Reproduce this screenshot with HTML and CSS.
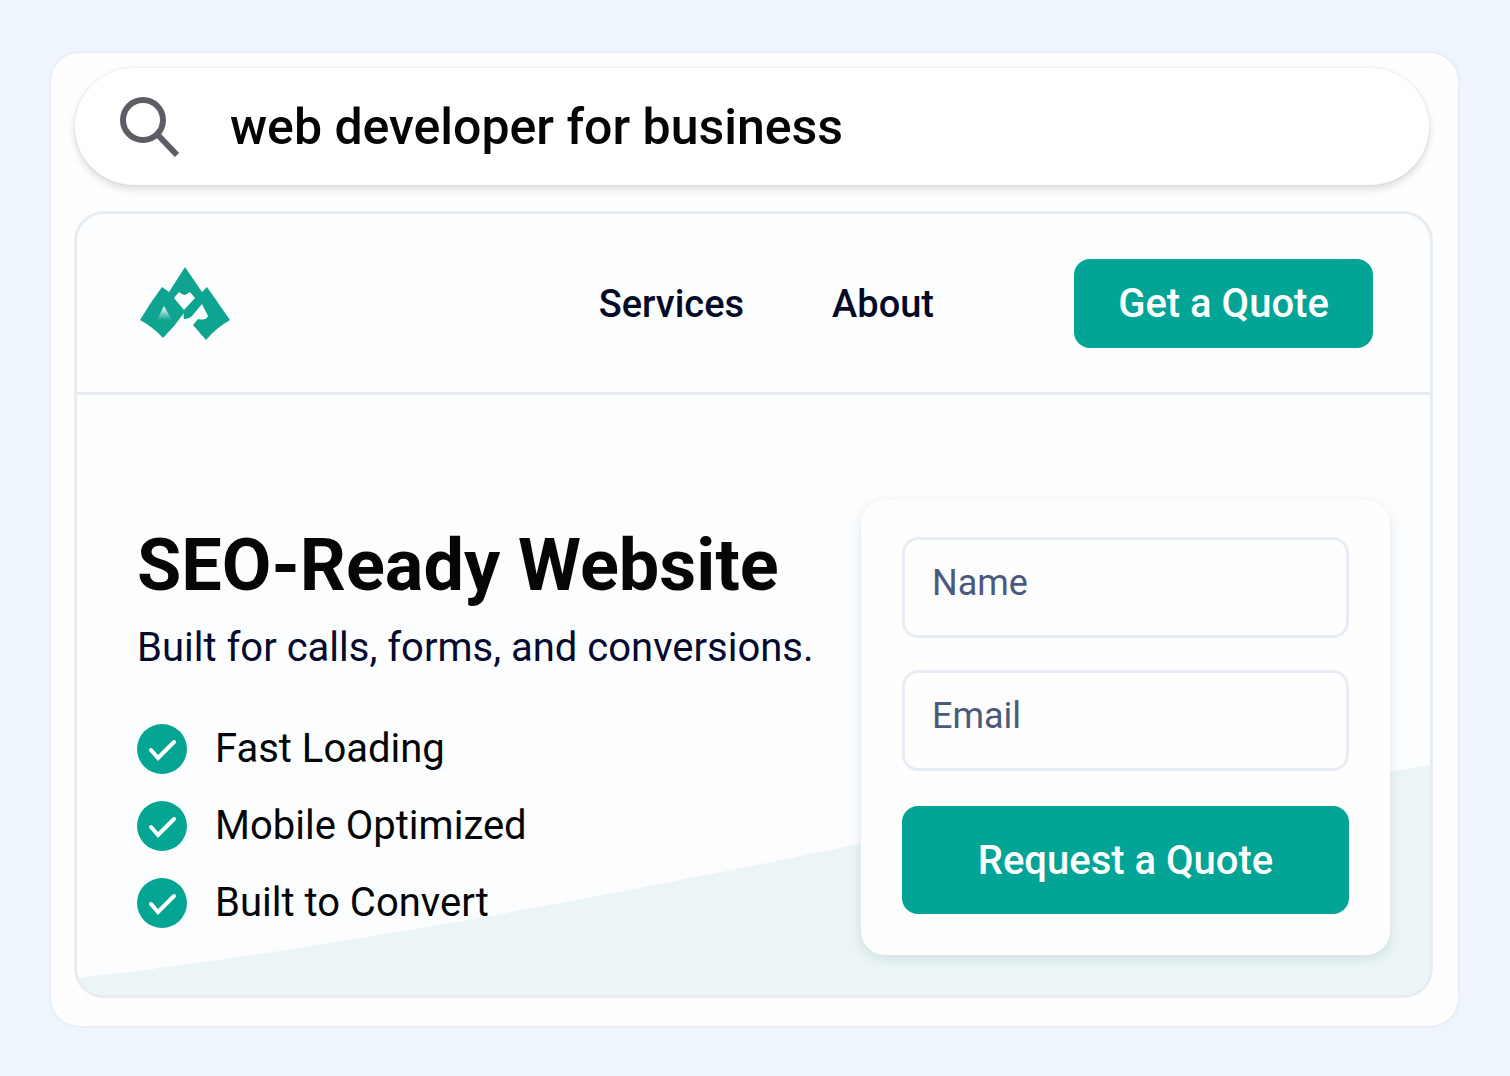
FILE: index.html
```html
<!DOCTYPE html>
<html lang="en">
<head>
<meta charset="UTF-8">
<meta name="viewport" content="width=device-width, initial-scale=1.0">
<title>SEO-Ready Website</title>

<link rel="stylesheet" href="styles.css">
</head>

<body>

<main class="container">

<!-- Search bar -->
<form class="search" role="search">
<svg class="search-icon" viewBox="0 0 60 60" aria-hidden="true">
<circle cx="23" cy="23" r="20" />
<path d="M37 37 L57 58" />
</svg>
<input type="text" name="q" aria-label="Search" value="web developer for business">
</form>

<!-- Website preview -->
<div class="site">

<header class="site-header">
<a class="logo" href="#" aria-label="Home">
<svg viewBox="0 0 90 74" aria-hidden="true">
<defs>
<linearGradient id="peak" x1="0" y1="0" x2="0" y2="1">
<stop offset="0" stop-color="#fff" />
<stop offset="1" stop-color="#fff" stop-opacity="0" />
</linearGradient>
</defs>
<path fill="#0fa490" d="M45 0 L62 25 L67 20 L90 53 Q76 61 66 73 L53 58 L58 52 Q66 54 68 49 L62 37 L52 49 Q49 52 44 52 Q43 49 44 46 Q35 59 23 71 Q13 60 0 53 Q10 36 22 20 L29 25 Z" />
<path fill="#fff" d="M39 25 Q42 28 45 28 L50 25 L55 31 L44 43 L34 31 Z" />
<path fill="url(#peak)" d="M24 39 L32 53 L17 53 Z" />
</svg>
</a>
<nav class="nav">
<a href="#services">Services</a>
<a href="#about">About</a>
</nav>
<button type="button" class="btn quote-btn">Get a Quote</button>
</header>

<section class="hero">
<svg class="wave" viewBox="0 0 1353 230" preserveAspectRatio="none" aria-hidden="true">
<path d="M0 213 C250 185 550 127 783 79 C950 44 1180 30 1353 0 V230 H0 Z" />
</svg>

<div class="hero-text">
<h1>SEO-Ready Website</h1>
<p>Built for calls, forms, and conversions.</p>
<ul class="features">
<li>
<svg viewBox="0 0 50 50" aria-hidden="true"><circle cx="25" cy="25" r="25" /><path d="M14 26 L21 34 L37 18" /></svg>
Fast Loading
</li>
<li>
<svg viewBox="0 0 50 50" aria-hidden="true"><circle cx="25" cy="25" r="25" /><path d="M14 26 L21 34 L37 18" /></svg>
Mobile Optimized
</li>
<li>
<svg viewBox="0 0 50 50" aria-hidden="true"><circle cx="25" cy="25" r="25" /><path d="M14 26 L21 34 L37 18" /></svg>
Built to Convert
</li>
</ul>
</div>

<form class="quote-form">
<input type="text" name="name" aria-label="Name" placeholder="Name">
<input type="email" name="email" aria-label="Email" placeholder="Email">
<button type="submit" class="btn">Request a Quote</button>
</form>
</section>

</div>

</main>

</body>
</html>
```
FILE: styles.css
```css
*{
    box-sizing:border-box;
}

body{
    margin:0;
    padding:53px 52px 51px 51px;
    font-family:Roboto, "Liberation Sans", sans-serif;
    color:#050608;
    background:#eff5fd;
}

.container{
    padding:15px 25px 28px 23px;
    background:#fefefe;
    border-radius:28px;
    box-shadow:0 0 3px rgba(100,120,150,0.2);
}

input, button{
    font-family:inherit;
}

/* Search bar */
.search{
    display:flex;
    align-items:center;
    gap:50px;
    height:117px;
    margin:0 4px 0 1px;
    padding:0 45px;
    background:#fff;
    border-radius:60px;
    box-shadow:0 4px 8px rgba(0,0,0,0.14), 0 0 3px rgba(0,0,0,0.08);
}

.search-icon{
    flex:none;
    width:60px;
    height:60px;
    fill:none;
    stroke:#5d5d66;
    stroke-width:6;
}

.search input{
    flex:1;
    min-width:0;
    padding:0;
    border:none;
    outline:none;
    background:none;
    font-size:50px;
    font-weight:500;
    color:#050505;
}

/* Website preview */
.site{
    margin-top:26px;
    border:3px solid #e7ecf3;
    border-radius:30px;
    background:#fcfdfe;
    overflow:hidden;
}

.site-header{
    display:flex;
    align-items:center;
    padding:45px 57px 44px 63px;
    border-bottom:3px solid #e7ecf3;
}

.logo svg{
    display:block;
    width:90px;
    height:74px;
}

.nav{
    display:flex;
    gap:88px;
    margin-left:auto;
    margin-right:140px;
}

.nav a{
    font-size:38px;
    font-weight:500;
    color:#050a26;
    text-decoration:none;
}

.btn{
    border:none;
    border-radius:16px;
    background:#02a595;
    color:#fff;
    font-size:40px;
    font-weight:500;
    cursor:pointer;
}

.quote-btn{
    width:299px;
    height:89px;
}

.hero{
    position:relative;
    display:flex;
    justify-content:space-between;
    padding:105px 40px 40px 60px;
}

.wave{
    position:absolute;
    left:0;
    bottom:0;
    width:100%;
    height:230px;
    fill:#ebf5f6;
}

.hero-text{
    position:relative;
    padding-top:24px;
}

h1{
    margin:0;
    font-size:72px;
    line-height:84px;
    font-weight:700;
}

.hero-text p{
    margin:16px 0 52px;
    font-size:40px;
    line-height:48px;
    color:#050a2e;
}

.features{
    display:grid;
    gap:27px;
    margin:0;
    padding:0;
    list-style:none;
}

.features li{
    display:flex;
    align-items:center;
    gap:28px;
    font-size:40px;
    line-height:50px;
}

.features svg{
    width:50px;
    height:50px;
}

.features circle{
    fill:#05a594;
}

.features path{
    fill:none;
    stroke:#fff;
    stroke-width:4;
    stroke-linecap:round;
}

.quote-form{
    position:relative;
    display:flex;
    flex-direction:column;
    gap:32px;
    width:529px;
    padding:37px 41px 41px;
    background:#fefefe;
    border-radius:24px;
    box-shadow:0 4px 12px rgba(40,80,100,0.13);
}

.quote-form input{
    width:100%;
    height:101px;
    padding:0 27px 10px;
    border:3px solid #e8edf5;
    border-radius:16px;
    background:#fefefe;
    font-size:36px;
}

.quote-form input::placeholder{
    color:#4b5a7c;
    opacity:1;
}

.quote-form .btn{
    height:108px;
    margin-top:3px;
}
```
